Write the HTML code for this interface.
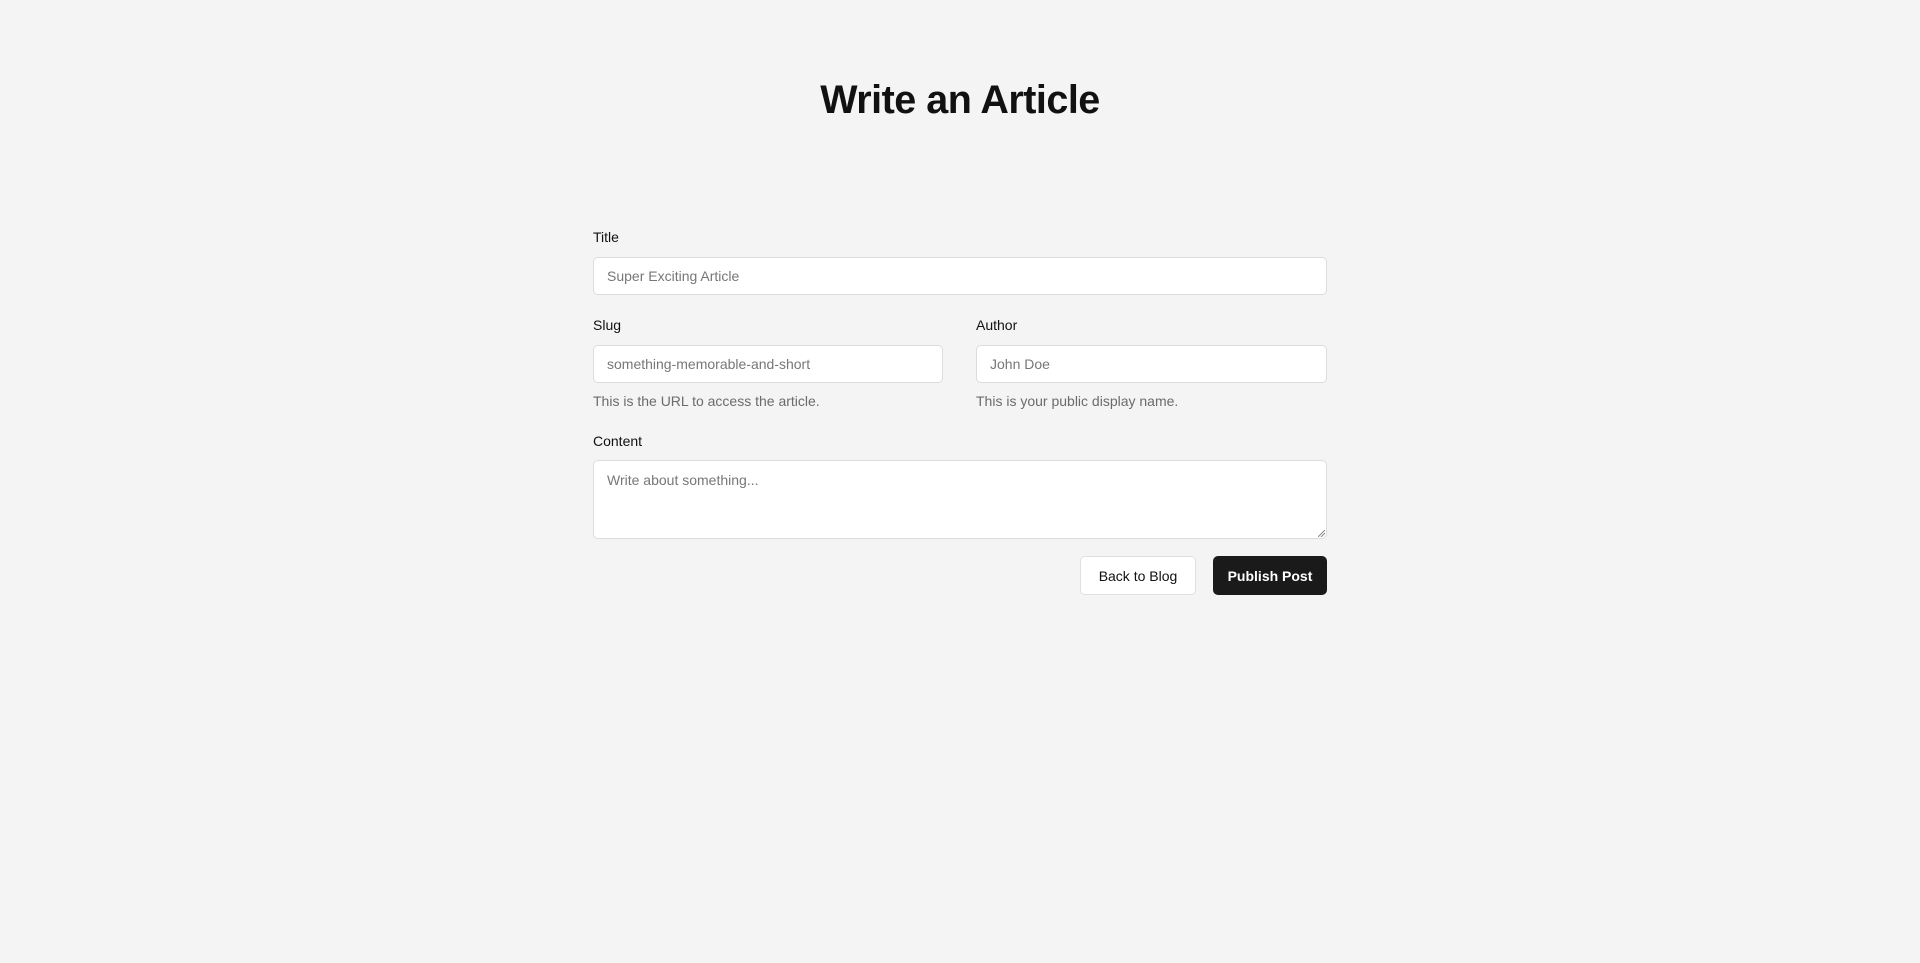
<!DOCTYPE html>
<html><head><style>
*{box-sizing:border-box}
body{margin:0;background:#f4f4f4;font-family:"Liberation Sans",sans-serif;color:#111;width:1920px;height:963px;overflow:hidden}
h1{position:absolute;top:76px;left:0;width:1920px;text-align:center;margin:0;font-size:39.5px;font-weight:bold;letter-spacing:-0.5px;line-height:48px}
.l{position:absolute;font-size:14px;line-height:18px}
.in{position:absolute;background:#fff;border:1px solid #dcdcdc;border-radius:5px;font-size:14px;color:#777;padding-left:13px;display:flex;align-items:center}
.h{position:absolute;font-size:14px;color:#6b6b6b}
.b{position:absolute;border-radius:5px;font-size:14px;display:flex;align-items:center;justify-content:center}
</style></head><body>
<h1>Write an Article</h1>
<div class="l" style="left:593px;top:228px">Title</div>
<div class="in" style="left:593px;top:257px;width:734px;height:38px">Super Exciting Article</div>
<div class="l" style="left:593px;top:316px">Slug</div>
<div class="in" style="left:593px;top:345px;width:350px;height:38px">something-memorable-and-short</div>
<div class="h" style="left:593px;top:393px">This is the URL to access the article.</div>
<div class="l" style="left:976px;top:316px">Author</div>
<div class="in" style="left:976px;top:345px;width:351px;height:38px">John Doe</div>
<div class="h" style="left:976px;top:393px">This is your public display name.</div>
<div class="l" style="left:593px;top:432px">Content</div>
<div class="in" style="left:593px;top:460px;width:734px;height:79px;align-items:flex-start;padding-top:11px">Write about something...</div>
<svg style="position:absolute;left:1318px;top:530px" width="7" height="7"><path d="M0 7L7 0M3 7L7 3" stroke="#888" stroke-width="1"/></svg>
<div class="b" style="left:1080px;top:556px;width:116px;height:39px;background:#fff;border:1px solid #e0e0e0">Back to Blog</div>
<div class="b" style="left:1213px;top:556px;width:114px;height:39px;background:#1a1a1a;color:#fff;font-weight:bold">Publish Post</div>
</body></html>
